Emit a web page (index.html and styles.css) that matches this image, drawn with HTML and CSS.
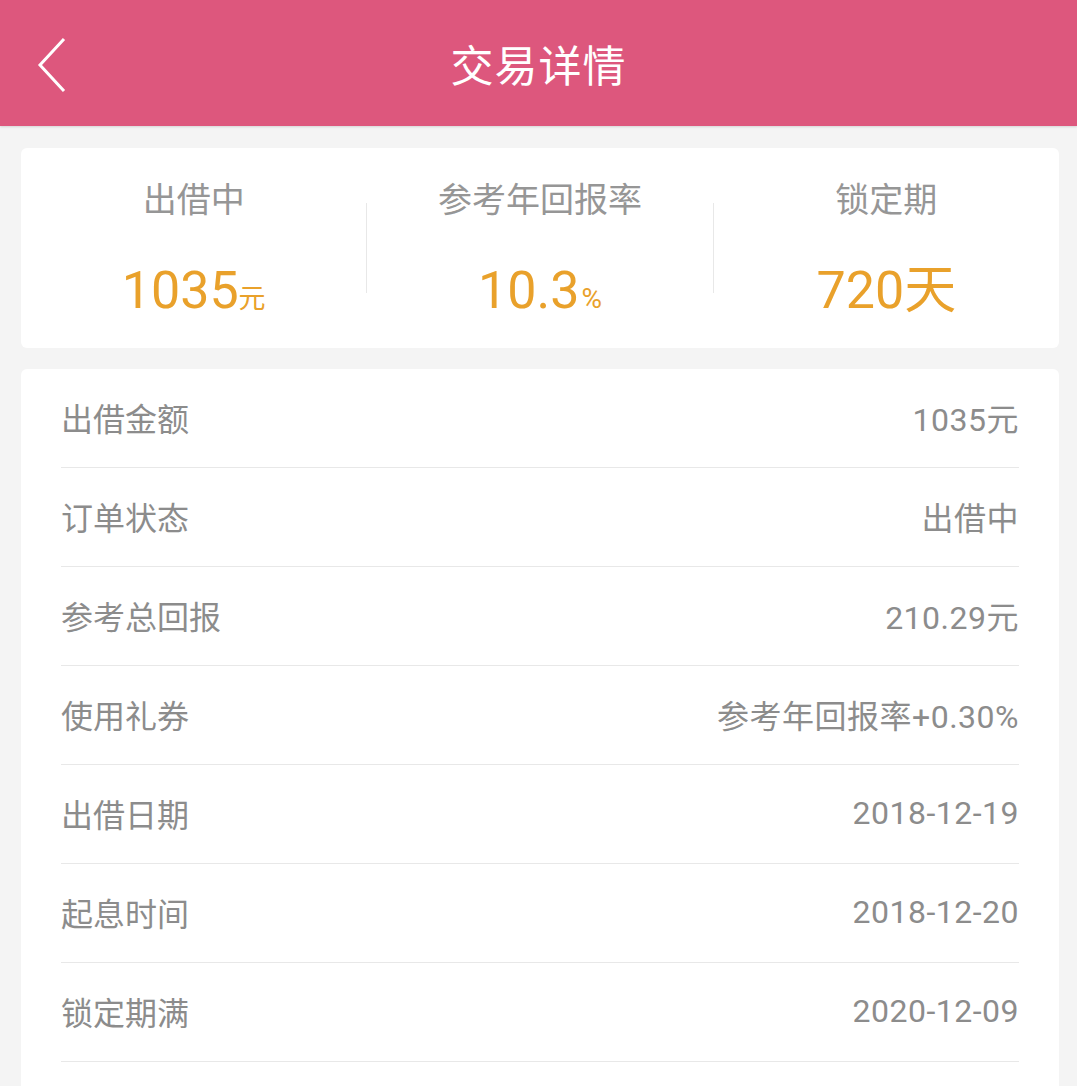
FILE: index.html
```html
<!DOCTYPE html>
<html>
<head>
  <meta charset="utf-8">
  <title>交易详情</title>
  <link rel="stylesheet" href="styles.css">
</head>
<body>
  <div class="topbar">
    <a class="back">
      <svg width="30" height="56" viewBox="0 0 30 56">
        <polyline points="27,3 3,29 27,55" fill="none" stroke="#fff" stroke-width="3" stroke-linejoin="miter"/>
      </svg>
    </a>
    <h1 class="title">交易详情</h1>
  </div>

  <div class="summary">
    <div class="stat">
      <div class="stat-label">出借中</div>
      <div class="stat-value">1035<small>元</small></div>
    </div>
    <div class="divider"></div>
    <div class="stat">
      <div class="stat-label">参考年回报率</div>
      <div class="stat-value">10.3<small class="pct">%</small></div>
    </div>
    <div class="divider"></div>
    <div class="stat">
      <div class="stat-label">锁定期</div>
      <div class="stat-value">720天</div>
    </div>
  </div>

  <div class="details">
    <div class="row"><span>出借金额</span><span class="val">1035元</span></div>
    <div class="row"><span>订单状态</span><span class="val">出借中</span></div>
    <div class="row"><span>参考总回报</span><span class="val">210.29元</span></div>
    <div class="row"><span>使用礼券</span><span class="val">参考年回报率+0.30%</span></div>
    <div class="row"><span>出借日期</span><span class="val">2018-12-19</span></div>
    <div class="row"><span>起息时间</span><span class="val">2018-12-20</span></div>
    <div class="row"><span>锁定期满</span><span class="val">2020-12-09</span></div>
    <div class="row"><span>&nbsp;</span><span>&nbsp;</span></div>
  </div>
</body>
</html>
```

FILE: styles.css
```css
* {
  box-sizing: border-box;
}

html, body {
  margin: 0;
  padding: 0;
  height: 100%;
  overflow: hidden;
}

body {
  background-color: #f4f4f4;
  font-family: Roboto, "Noto Sans CJK SC", sans-serif;
  color: #8e8e8e;
}

.topbar {
  position: relative;
  height: 126px;
  background-color: #dd577d;
  display: flex;
  align-items: center;
  justify-content: center;
  box-shadow: 0 1px 2px rgba(0, 0, 0, .12);
}

.back {
  position: absolute;
  left: 37px;
  top: 36px;
  line-height: 0;
}

.title {
  margin: 0;
  color: #fff;
  font-size: 43px;
  font-weight: 400;
  letter-spacing: 1px;
}

.summary {
  display: flex;
  margin: 22px 18px 0 21px;
  height: 200px;
  background-color: #fff;
  border-radius: 6px;
}

.stat {
  flex: 1;
  text-align: center;
  padding-top: 32px;
}

.divider {
  align-self: center;
  width: 1px;
  height: 90px;
  background-color: #e8e8e8;
}

.stat-label {
  font-size: 34px;
  line-height: 40px;
  color: #969696;
}

.stat-value {
  margin-top: 43px;
  font-size: 52px;
  line-height: 56px;
  color: #e9a12b;
}
.stat-value small {
  font-size: 27px;
}
.stat-value .pct {
  font-size: 28px;
  margin-left: 2px;
}

.details {
  margin: 21px 18px 0 21px;
  padding: 0 40px;
  background-color: #fff;
  border-radius: 6px 6px 0 0;
}

.row {
  display: flex;
  justify-content: space-between;
  align-items: center;
  height: 99px;
  border-bottom: 1px solid #e8e8e8;
  padding-bottom: 3px;
  font-size: 32px;
  color: #8c8c8c;
}

.val {
  letter-spacing: .5px;
}
```
